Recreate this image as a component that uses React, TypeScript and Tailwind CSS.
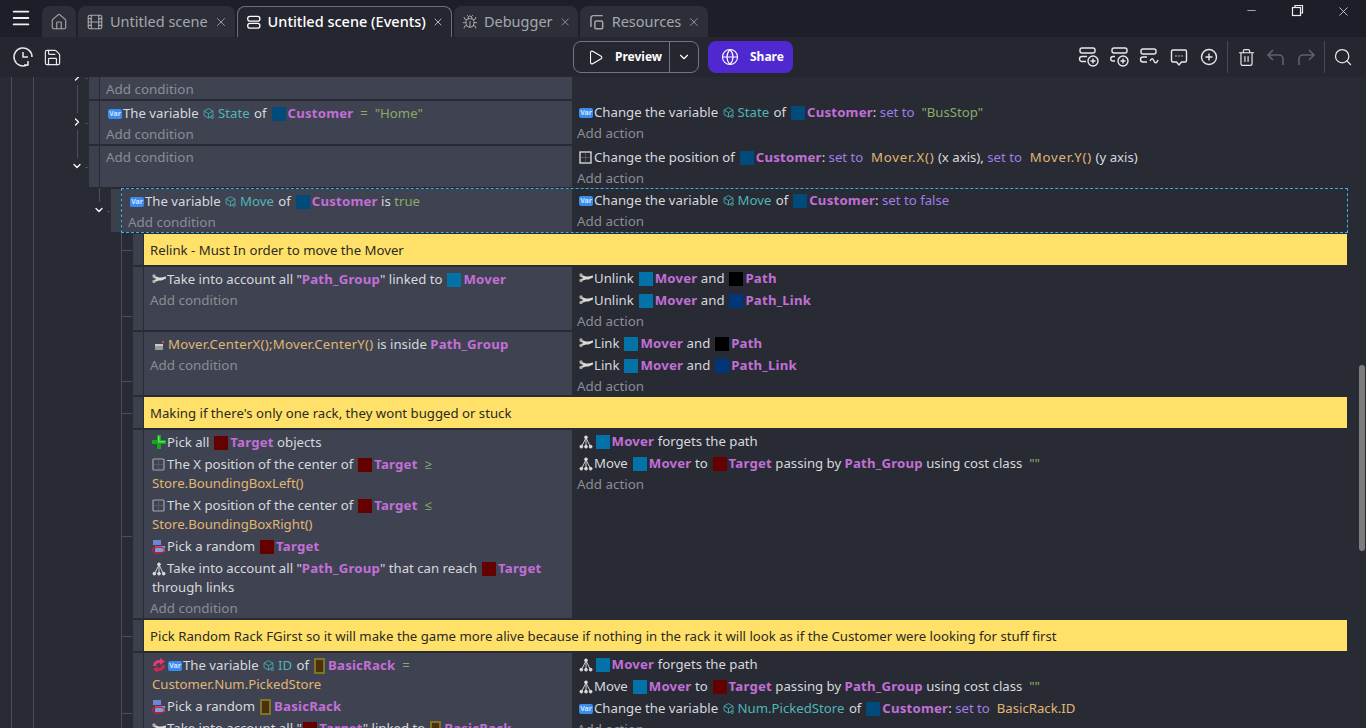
import type { ReactNode } from "react";
import { Bug, ChevronDown, ChevronRight, Film, Globe, Home, Menu, Minus, Play, Save, Search, Trash2, X } from "lucide-react";

const font = "font-['Noto_Sans','Open_Sans',sans-serif]";

/* ---------- small drawings ---------- */

function VarBadge() {
  return (
    <span className="mr-[1px] inline-block h-[10px] w-[14px] overflow-hidden rounded-[2px] bg-[#3b8cf0] text-center align-[-1px] text-[7px] font-bold leading-[10px] text-[#cfe3ff]">
      Var
    </span>
  );
}

function CubeIcon() {
  return (
    <svg width="13" height="13" viewBox="0 0 16 16" fill="none" stroke="#45a3a8" strokeWidth="1.2" className="mr-[3px] inline-block align-[-2px]">
      <path d="M8 2l5.5 3v5.5L8 13.5 2.5 10.5V5zM2.5 5L8 8l5.5-3M8 8v5.5" />
      <circle cx="12.5" cy="12.5" r="1.6" />
    </svg>
  );
}

function LinkIcon() {
  return (
    <svg width="15" height="12" viewBox="0 0 15 12" className="inline-block align-[-1px]">
      <path d="M1 2.500l6 2h2.500L14 3.500v2L9.500 7.500H7L1 9.500v-2L4.500 6 1 4.500z" fill="#dcdcd4" />
      <circle cx="2" cy="3" r="1.700" fill="#b0b0a8" />
      <circle cx="2" cy="8.500" r="1.700" fill="#b0b0a8" />
    </svg>
  );
}

function PathIcon() {
  return (
    <svg width="14" height="14" viewBox="0 0 15 15" fill="none" stroke="#dcdcdc" strokeWidth="1" className="mr-[1px] inline-block align-[-3px]">
      <path d="M7.500 3L3 12M7.500 3L12 12M7.500 3v9" />
      <circle cx="7.500" cy="2.500" r="1.500" fill="#dcdcdc" />
      <circle cx="2.500" cy="12.500" r="1.500" fill="#dcdcdc" />
      <circle cx="7.500" cy="12.500" r="1.500" fill="#dcdcdc" />
      <circle cx="12.500" cy="12.500" r="1.500" fill="#dcdcdc" />
    </svg>
  );
}

function PlusIcon() {
  return (
    <svg width="14" height="14" viewBox="0 0 14 14" className="mr-[1px] inline-block align-[-2px]">
      <path d="M5 0h4v5h5v4H9v5H5V9H0V5h5z" fill="#14a81c" />
      <path d="M6 1h1.500v5H13v1.500H6z" fill="#5ee05e" />
    </svg>
  );
}

function PositionIcon({ bright }: { bright?: boolean }) {
  return (
    <svg width="13" height="13" viewBox="0 0 13 13" fill="none" className="mr-[2px] inline-block align-[-2px]">
      <rect x="1" y="1" width="11" height="11" rx={bright ? 0 : 1} stroke={bright ? "#f0f0f0" : "#a2a5ad"} strokeWidth="1.2" />
      <path d="M6.500 2v9M2 6.500h9" stroke="#5c606b" strokeWidth="0.8" />
    </svg>
  );
}

function RandomIcon() {
  return (
    <svg width="14" height="14" viewBox="0 0 14 14" className="mr-[1px] inline-block align-[-3px]">
      <rect x="1" y="0" width="8" height="5" fill="#6e86d8" />
      <rect x="3" y="6" width="10" height="6" fill="#8098e0" />
      <ellipse cx="6.500" cy="10" rx="6" ry="3" fill="none" stroke="#d41c2c" strokeWidth="1.3" />
    </svg>
  );
}

function InsideIcon() {
  return (
    <svg width="14" height="13" viewBox="0 0 14 13" className="mr-[2px] inline-block align-[-2px]">
      <rect x="3" y="6" width="8" height="6" fill="#9a9a9a" />
      <rect x="3" y="6" width="8" height="2" fill="#c8c8c8" />
      <rect x="10" y="3" width="2" height="2" fill="#d05050" />
    </svg>
  );
}

function SwapIcon() {
  return (
    <svg width="14" height="15" viewBox="0 0 14 15" className="mr-[2px] inline-block align-[-3px]">
      <path d="M1 8a6 6 0 0 1 7-6V0l5 3.500L8 7V5a3.500 3.500 0 0 0-4 3z" fill="#e8386e" />
      <path d="M13 7a6 6 0 0 1-7 6v2L1 11.500 6 8v2a3.500 3.500 0 0 0 4-3z" fill="#c82858" />
    </svg>
  );
}

function UndoIcon({ flip }: { flip?: boolean }) {
  return (
    <svg width="22" height="22" viewBox="0 0 22 22" fill="none" stroke="currentColor" strokeWidth="1.6" className={flip ? "-scale-x-100" : ""}>
      <path d="M8 4L3 9l5 5M3 9h11a4 4 0 0 1 4 4v6" />
    </svg>
  );
}

/* ---------- instruction tokens ---------- */

const Name = ({ children }: { children: ReactNode }) => <span className="font-bold tracking-[0.2px] text-[#c26fd8]">{children}</span>;
const Vari = ({ children }: { children: ReactNode }) => <span className="mr-[1px] text-[#4fb5b8]">{children}</span>;
const Val = ({ children }: { children: ReactNode }) => <span className="text-[#88ac6a]">{children}</span>;
const Op = ({ children }: { children: ReactNode }) => <span className="text-[#a27ce8]">{children}</span>;
const Expr = ({ children }: { children: ReactNode }) => <span className="text-[#e0b672]">{children}</span>;
const CenterExpr = ({ children }: { children: ReactNode }) => <span className="tracking-[0.25px] text-[#e0b672]">{children}</span>;
const AxisExpr = ({ children }: { children: ReactNode }) => <span className="tracking-[0.8px] text-[#e0b672]">{children}</span>;

function Obj({ name, swatch }: { name: string; swatch: string }) {
  return (
    <>
      <span className={`ml-[1.5px] mr-[2px] inline-block h-[14px] w-[14px] align-[-3px] ${swatch}`} />
      <Name>{name}</Name>
    </>
  );
}

function Rack() {
  return (
    <>
      <span className="ml-[1.5px] mr-[3px] inline-block h-[16px] w-[11px] border-2 border-[#7d7424] bg-[#4d2f10] align-[-4px]" />
      <Name>BasicRack</Name>
    </>
  );
}

const Customer = () => <Obj name="Customer" swatch="bg-[#014a7c]" />;
const Mover = () => <Obj name="Mover" swatch="bg-[#0272a8]" />;
const Target = () => <Obj name="Target" swatch="bg-[#650000]" />;
const PathObj = () => <Obj name="Path" swatch="bg-black" />;
const PathLink = () => <Obj name="Path_Link" swatch="bg-[#02367a]" />;

function Line({ children }: { children: ReactNode }) {
  return <div className="ml-[2px] py-[1.5px] leading-[19px]">{children}</div>;
}

function Add({ children }: { children: ReactNode }) {
  return <div className="text-[13.4px] leading-[21px] text-[#8a8d96]">{children}</div>;
}

/* ---------- rows ---------- */

type EventRowProps = {
  left: string;
  height: string;
  conditions: ReactNode;
  actions: ReactNode;
  selected?: boolean;
};

function EventRow({ left, height, conditions, actions, selected }: EventRowProps) {
  return (
    <div className={`mb-[2px] flex ${left} ${height}`}>
      <div className="mr-[1px] w-[10px] shrink-0 bg-[#3c404d]" />
      <div className={`flex min-w-0 flex-1 ${selected ? "relative" : ""}`}>
        <div className="min-w-0 flex-1 overflow-hidden bg-[#3f4351] pl-[6px] pt-[1px] text-[#d7d9de]">{conditions}</div>
        <div className="w-[775px] shrink-0 pl-[5px] text-[#d7d9de]">{actions}</div>
        {selected && <div className="pointer-events-none absolute inset-x-[-1px] inset-y-[-1px] border border-dashed border-[#35b0e6]" />}
      </div>
    </div>
  );
}

function CommentRow({ text }: { text: string }) {
  return (
    <div className="mb-[2px] ml-[133px] flex h-[31px]">
      <div className="mr-[1px] w-[10px] shrink-0 bg-[#3c404d]" />
      <div className="flex min-w-0 flex-1 items-center bg-[#ffe16a] pl-[6px] pt-[2px] text-[#2b2a22]">{text}</div>
    </div>
  );
}

function TreeLines() {
  const lines = [
    "left-[11px] top-0 h-full w-px",
    "left-[33px] top-0 h-full w-px",
    "left-[77px] top-[8px] h-[28px] w-px",
    "left-[77px] top-[53px] h-[28px] w-px",
    "left-[85px] top-[1px] h-px w-[3px]",
    "left-[85px] top-[46px] h-px w-[3px]",
    "left-[85px] top-[90px] h-px w-[3px]",
    "left-[99px] top-[111px] h-[14px] w-px",
    "left-[107px] top-[134px] h-px w-[3px]",
    "left-[121px] top-[156px] h-full w-px",
    "left-[121px] top-[173px] h-px w-[11px]",
    "left-[121px] top-[239px] h-px w-[11px]",
    "left-[121px] top-[304px] h-px w-[11px]",
    "left-[121px] top-[336px] h-px w-[11px]",
    "left-[121px] top-[459px] h-px w-[11px]",
    "left-[121px] top-[559px] h-px w-[11px]",
    "left-[121px] top-[636px] h-px w-[11px]",
  ];
  return (
    <div aria-hidden className="pointer-events-none absolute inset-0">
      {lines.map((c) => (
        <div key={c} className={`absolute bg-[#4b4e59] ${c}`} />
      ))}
      <ChevronRight size={12} strokeWidth={2.5} className="absolute left-[71px] top-[-6px] text-white" />
      <ChevronRight size={12} strokeWidth={2.5} className="absolute left-[71px] top-[39px] text-white" />
      <ChevronDown size={12} strokeWidth={2.5} className="absolute left-[71px] top-[83px] text-white" />
      <ChevronDown size={12} strokeWidth={2.5} className="absolute left-[93px] top-[127px] text-white" />
    </div>
  );
}

/* ---------- chrome ---------- */

function TabIcon({ kind }: { kind: "events" | "resources" }) {
  if (kind === "events") {
    return (
      <svg width="18" height="18" viewBox="0 0 18 18" fill="none" stroke="currentColor" strokeWidth="1.5">
        <rect x="2" y="2.500" width="14" height="5.500" rx="2.500" />
        <rect x="2" y="10.500" width="14" height="5.500" rx="2.500" />
      </svg>
    );
  }
  return (
    <svg width="18" height="18" viewBox="0 0 18 18" fill="none" stroke="currentColor" strokeWidth="1.5">
      <path d="M3 14V5a2.500 2.500 0 0 1 2.500-2.500H15" />
      <rect x="7" y="8" width="8" height="8" rx="1.500" />
    </svg>
  );
}

function Tab({ icon, label, width, active }: { icon: ReactNode; label: string; width: string; active?: boolean }) {
  return (
    <div
      className={`flex h-[31px] shrink-0 items-center gap-[6px] rounded-t-[8px] pl-[8px] text-[14.5px] ${width} ${
        active
          ? "border border-b-0 border-[#6f717a] bg-[#25262f] font-medium text-white"
          : "bg-[#2d2f38] text-[#a5a7ae]"
      }`}
    >
      {icon}
      <span className="flex-1 whitespace-nowrap">{label}</span>
      <X size={14} strokeWidth={1.5} className={`mr-[7px] ${active ? "text-[#e4e4e8]" : "text-[#a5a7ae]"}`} />
    </div>
  );
}

function ToolIcon({ children, dim }: { children: ReactNode; dim?: boolean }) {
  return <div className={`flex h-[30px] w-[30px] items-center justify-center ${dim ? "text-[#5f616a]" : "text-[#e8e8ec]"}`}>{children}</div>;
}

function AddEventIcon({ small }: { small?: boolean }) {
  return (
    <svg width="22" height="22" viewBox="0 0 22 22" fill="none" stroke="currentColor" strokeWidth="1.4">
      <rect x={small ? 4 : 2} y="2" width="15" height="5" rx="2" />
      <path d={small ? "M7 10.500H5a1.500 1.500 0 0 0 0 4.500h2" : "M9 10.500H4a1.500 1.500 0 0 0 0 5h4"} />
      <circle cx="15" cy="15" r="5" />
      <path d="M15 12.500v5M12.500 15h5" />
    </svg>
  );
}

function Toolbar() {
  return (
    <div className="grid h-[40px] grid-cols-[1fr_auto_1fr] items-center bg-[#25262f]">
      <div className="flex items-center gap-[9px] pl-[12px] text-[#e8e8ec]">
        <svg width="22" height="22" viewBox="0 0 22 22" fill="none" stroke="currentColor" strokeWidth="1.5">
          <path d="M11 6v5h5M20 11a9 9 0 1 0-5 8M12 19h4v-4" />
        </svg>
        <Save size={19} strokeWidth={1.5} />
      </div>
      <div className="flex items-center gap-[9px]">
        <div className="flex h-[32px] items-center rounded-[8px] border border-[#73757e]">
          <div className="flex h-full w-[96px] items-center gap-[11px] border-r border-[#73757e] pl-[13px] text-[12px] font-bold text-white">
            <Play size={17} strokeWidth={1.5} />
            Preview
          </div>
          <div className="flex w-[28px] justify-center text-white">
            <ChevronDown size={14} />
          </div>
        </div>
        <div className="flex h-[32px] w-[85px] items-center gap-[11px] rounded-[8px] bg-[#4f28d0] pl-[13px] text-[12px] font-bold text-white">
          <Globe size={18} strokeWidth={1.5} />
          Share
        </div>
      </div>
      <div className="flex items-center justify-end pr-[8px]">
        <ToolIcon><AddEventIcon /></ToolIcon>
        <ToolIcon><AddEventIcon small /></ToolIcon>
        <ToolIcon>
          <svg width="22" height="22" viewBox="0 0 22 22" fill="none" stroke="currentColor" strokeWidth="1.4">
            <rect x="3" y="3" width="15" height="5" rx="2" />
            <path d="M9 11H5a1.500 1.500 0 0 0 0 5h4M12 15c1.500-3 3-3 4 0s3 2 4-1" />
          </svg>
        </ToolIcon>
        <ToolIcon>
          <svg width="20" height="20" viewBox="0 0 20 20" fill="none" stroke="currentColor" strokeWidth="1.4">
            <path d="M4 3h12a1.500 1.500 0 0 1 1.500 1.500v9A1.500 1.500 0 0 1 16 15h-3.500L10 18l-2.500-3H4a1.500 1.500 0 0 1-1.500-1.500v-9A1.500 1.500 0 0 1 4 3z" />
            <path d="M6.500 9h1M9.500 9h1M12.500 9h1" />
          </svg>
        </ToolIcon>
        <ToolIcon>
          <svg width="20" height="20" viewBox="0 0 20 20" fill="none" stroke="currentColor" strokeWidth="1.4">
            <circle cx="10" cy="10" r="7.500" />
            <path d="M10 6.500v7M6.500 10h7" />
          </svg>
        </ToolIcon>
        <div className="mx-[3px] h-[32px] w-px bg-[#474953]" />
        <ToolIcon><Trash2 size={19} strokeWidth={1.5} /></ToolIcon>
        <ToolIcon dim><UndoIcon /></ToolIcon>
        <ToolIcon dim><UndoIcon flip /></ToolIcon>
        <div className="mx-[3px] h-[32px] w-px bg-[#474953]" />
        <ToolIcon><Search size={20} strokeWidth={1.5} /></ToolIcon>
      </div>
    </div>
  );
}

function TitleBar() {
  return (
    <div className="flex h-[37px] items-end bg-[#1d1e27]">
      <div className="flex h-full w-[42px] shrink-0 items-center justify-center pb-[2px] text-[#f0f0f2]">
        <Menu size={22} strokeWidth={2} />
      </div>
      <div className="flex gap-[2px]">
        <div className="flex h-[31px] w-[34px] items-center justify-center rounded-t-[8px] bg-[#2d2f38] text-[#a5a7ae]">
          <Home size={18} strokeWidth={1.5} />
        </div>
        <Tab icon={<Film size={18} strokeWidth={1.5} />} label="Untitled scene" width="w-[157px]" />
        <Tab icon={<TabIcon kind="events" />} label="Untitled scene (Events)" width="w-[215px]" active />
        <Tab icon={<Bug size={18} strokeWidth={1.5} />} label="Debugger" width="w-[124px]" />
        <Tab icon={<TabIcon kind="resources" />} label="Resources" width="w-[128px]" />
      </div>
      <div className="ml-auto flex h-full items-start pt-[4px] text-[#f0f0f2]">
        <div className="flex h-[15px] w-[46px] justify-center"><Minus size={13} strokeWidth={1.2} /></div>
        <div className="flex h-[15px] w-[46px] justify-center">
          <svg width="13" height="13" viewBox="0 0 13 13" fill="none" stroke="currentColor" strokeWidth="1.200">
            <rect x="1.500" y="3.500" width="8" height="8" />
            <path d="M4 3.500V1.500h7.500V9H9.500" />
          </svg>
        </div>
        <div className="flex h-[15px] w-[46px] justify-center"><X size={15} strokeWidth={1.2} /></div>
      </div>
    </div>
  );
}

/* ---------- sheet ---------- */

function EventSheet() {
  return (
    <div className="relative flex-1 overflow-hidden bg-[#282b34] pr-[19px] text-[13.2px]">
      <TreeLines />
      <div className="relative">
        <EventRow left="ml-[89px]" height="h-[22px]" conditions={<div className="pt-[1px]"><Add>Add condition</Add></div>} actions={null} />
        <EventRow
          left="ml-[89px]"
          height="h-[43px]"
          conditions={
            <>
              <Line><VarBadge />The variable <CubeIcon /><Vari>State</Vari> of <Customer /> <Val>&nbsp;=&nbsp; "Home"</Val></Line>
              <Add>Add condition</Add>
            </>
          }
          actions={
            <>
              <Line><VarBadge />Change the variable <CubeIcon /><Vari>State</Vari> of <Customer />: <Op>set to</Op> <Val>&nbsp;"BusStop"</Val></Line>
              <Add>Add action</Add>
            </>
          }
        />
        <EventRow
          left="ml-[89px]"
          height="h-[41px]"
          conditions={<Add>Add condition</Add>}
          actions={
            <>
              <Line><PositionIcon bright />Change the position of <Customer />: <Op>set to</Op> <AxisExpr>&nbsp;Mover.X()</AxisExpr> (x axis), <Op>set to</Op> <AxisExpr>&nbsp;Mover.Y()</AxisExpr> (y axis)</Line>
              <Add>Add action</Add>
            </>
          }
        />
        <EventRow
          left="ml-[111px]"
          height="h-[43px]"
          selected
          conditions={
            <>
              <Line><VarBadge />The variable <CubeIcon /><Vari>Move</Vari> of <Customer /> is <Val>true</Val></Line>
              <Add>Add condition</Add>
            </>
          }
          actions={
            <>
              <Line><VarBadge />Change the variable <CubeIcon /><Vari>Move</Vari> of <Customer />: <Op>set to false</Op></Line>
              <Add>Add action</Add>
            </>
          }
        />
        <CommentRow text="Relink - Must In order to move the Mover" />
        <EventRow
          left="ml-[133px]"
          height="h-[63px]"
          conditions={
            <>
              <Line><LinkIcon />Take into account all "<Name>Path_Group</Name>" linked to <Mover /></Line>
              <Add>Add condition</Add>
            </>
          }
          actions={
            <>
              <Line><LinkIcon />Unlink <Mover /> and <PathObj /></Line>
              <Line><LinkIcon />Unlink <Mover /> and <PathLink /></Line>
              <Add>Add action</Add>
            </>
          }
        />
        <EventRow
          left="ml-[133px]"
          height="h-[63px]"
          conditions={
            <>
              <Line><InsideIcon /><CenterExpr>Mover.CenterX();Mover.CenterY()</CenterExpr> is inside <Name>Path_Group</Name></Line>
              <Add>Add condition</Add>
            </>
          }
          actions={
            <>
              <Line><LinkIcon />Link <Mover /> and <PathObj /></Line>
              <Line><LinkIcon />Link <Mover /> and <PathLink /></Line>
              <Add>Add action</Add>
            </>
          }
        />
        <CommentRow text="Making if there's only one rack, they wont bugged or stuck" />
        <EventRow
          left="ml-[133px]"
          height="h-[188px]"
          conditions={
            <>
              <Line><PlusIcon />Pick all <Target /> objects</Line>
              <Line><PositionIcon />The X position of the center of <Target /> <Val>&nbsp;≥</Val><br /><Expr>Store.BoundingBoxLeft()</Expr></Line>
              <Line><PositionIcon />The X position of the center of <Target /> <Val>&nbsp;≤</Val><br /><Expr>Store.BoundingBoxRight()</Expr></Line>
              <Line><RandomIcon />Pick a random <Target /></Line>
              <Line><PathIcon />Take into account all "<Name>Path_Group</Name>" that can reach <Target /> through links</Line>
              <Add>Add condition</Add>
            </>
          }
          actions={
            <>
              <Line><PathIcon /><Mover /> forgets the path</Line>
              <Line><PathIcon />Move <Mover /> to <Target /> passing by <Name>Path_Group</Name> using cost class <Val>&nbsp;""</Val></Line>
              <Add>Add action</Add>
            </>
          }
        />
        <CommentRow text="Pick Random Rack FGirst so it will make the game more alive because if nothing in the rack it will look as if the Customer were looking for stuff first" />
        <EventRow
          left="ml-[133px]"
          height="h-[90px]"
          conditions={
            <>
              <Line><SwapIcon /><VarBadge />The variable <CubeIcon /><Vari>ID</Vari> of <Rack /> <Val>&nbsp;=</Val><br /><Expr>Customer.Num.PickedStore</Expr></Line>
              <Line><RandomIcon />Pick a random <Rack /></Line>
              <Line><LinkIcon />Take into account all "<Target />" linked to <Rack /></Line>
            </>
          }
          actions={
            <>
              <Line><PathIcon /><Mover /> forgets the path</Line>
              <Line><PathIcon />Move <Mover /> to <Target /> passing by <Name>Path_Group</Name> using cost class <Val>&nbsp;""</Val></Line>
              <Line><VarBadge />Change the variable <CubeIcon /><Vari>Num.PickedStore</Vari> of <Customer />: <Op>set to</Op> <Expr>&nbsp;BasicRack.ID</Expr></Line>
              <Add>Add action</Add>
            </>
          }
        />
      </div>
      <div className="absolute right-[1px] top-[288px] h-[186px] w-[6px] rounded-full bg-[#7a7c7e]" />
    </div>
  );
}

export default function App() {
  return (
    <div className={`flex h-[728px] w-[1366px] flex-col overflow-hidden ${font}`}>
      <TitleBar />
      <Toolbar />
      <EventSheet />
    </div>
  );
}
